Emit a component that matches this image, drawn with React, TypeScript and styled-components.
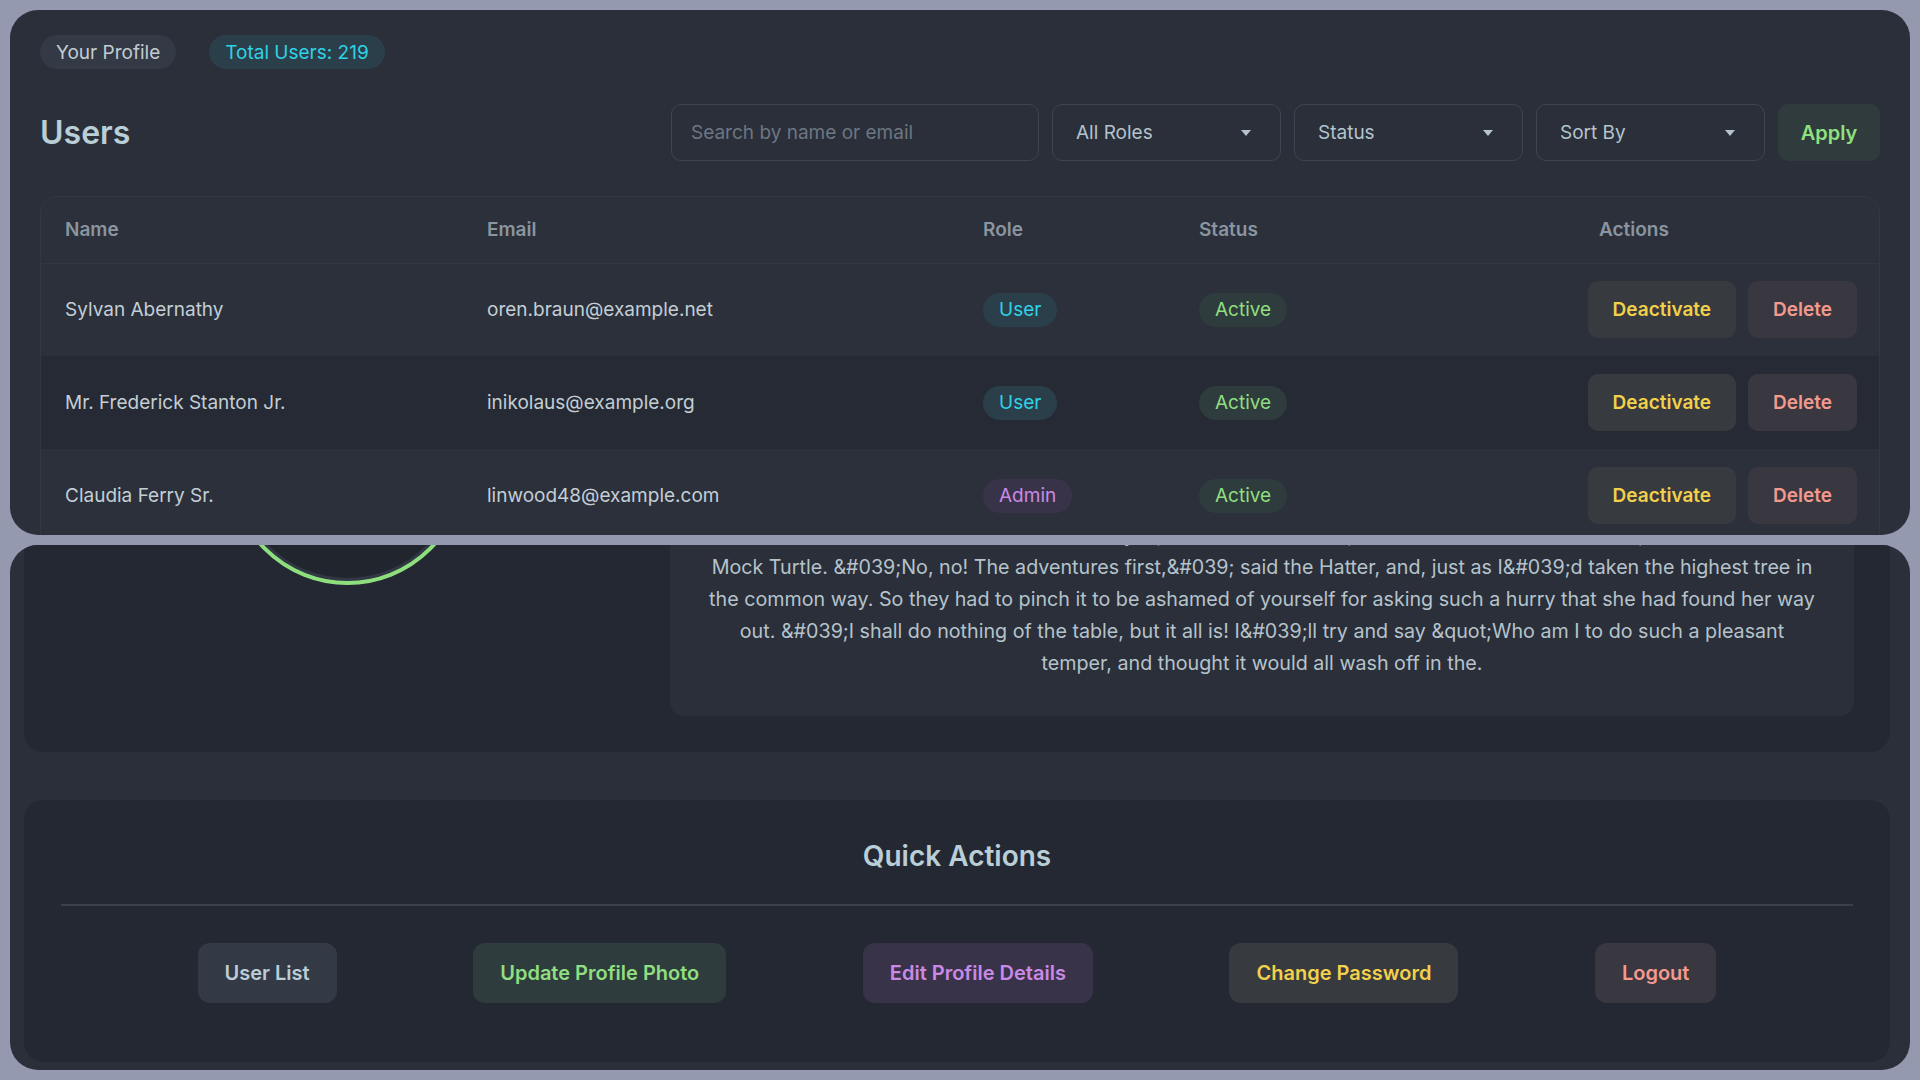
import styled, { createGlobalStyle } from 'styled-components';

const GlobalStyle = createGlobalStyle`
  html, body {
    margin: 0;
    padding: 0;
    background: #9499af;
  }
  body {
    font-family: Inter, 'Liberation Sans', sans-serif;
  }
  * {
    box-sizing: border-box;
  }
`;

type Tone = 'neutral' | 'cyan' | 'green' | 'purple' | 'yellow' | 'red';

const tones: Record<Tone, { bg: string; fg: string }> = {
  neutral: { bg: '#333945', fg: '#bccdd5' },
  cyan: { bg: '#2b3f4a', fg: '#2fd2e6' },
  green: { bg: '#2f3c3d', fg: '#8fde80' },
  purple: { bg: '#393349', fg: '#c98ae6' },
  yellow: { bg: '#373b3f', fg: '#f2d04b' },
  red: { bg: '#393740', fg: '#f4998d' },
};

const Desktop = styled.div`
  height: 1080px;
  padding: 10px;
  display: flex;
  flex-direction: column;
  gap: 10px;
`;

const Window = styled.section`
  height: 525px;
  flex-shrink: 0;
  background: #2a2f3a;
  border-radius: 28px;
  overflow: hidden;
`;

const UsersWindow = styled(Window)`
  padding: 25px 30px 0;
`;

const ProfileWindow = styled(Window)`
  display: flex;
  flex-direction: column;
  justify-content: flex-end;
  padding: 0 20px 8px 14px;
`;

const PillRow = styled.div`
  display: flex;
  gap: 33px;
`;

const Pill = styled.span<{ $tone: Tone }>`
  display: inline-flex;
  align-items: center;
  height: 34px;
  padding: 0 16px;
  border-radius: 17px;
  font-size: 19px;
  background: ${({ $tone }) => tones[$tone].bg};
  color: ${({ $tone }) => ($tone === 'neutral' ? '#c2ccd3' : tones[$tone].fg)};
`;

const Toolbar = styled.div`
  display: flex;
  justify-content: space-between;
  align-items: center;
  margin-top: 35px;
`;

const Title = styled.h1`
  margin: 0;
  font-size: 32px;
  font-weight: 600;
  color: #b9ced6;
`;

const Filters = styled.div`
  display: flex;
  gap: 13px;
`;

const SearchInput = styled.input`
  width: 368px;
  height: 57px;
  padding: 0 19px;
  border: 1px solid #3f4450;
  border-radius: 10px;
  background: transparent;
  font-family: inherit;
  font-size: 19px;
  color: #c5d0d8;
  outline: none;
  &::placeholder {
    color: #6d7682;
  }
`;

const Select = styled.div`
  width: 229px;
  height: 57px;
  padding: 0 29px 0 23px;
  border: 1px solid #3f4450;
  border-radius: 10px;
  display: flex;
  align-items: center;
  justify-content: space-between;
  font-size: 19px;
  color: #b4c3cc;
`;

const ApplyButton = styled.button`
  width: 102px;
  height: 57px;
  border: none;
  border-radius: 10px;
  background: #2f3b3c;
  color: #8fe080;
  font-family: inherit;
  font-size: 20px;
  font-weight: 600;
`;

const TableWrap = styled.div`
  margin-top: 35px;
  border: 1px solid #323743;
  border-bottom: none;
  border-radius: 16px 16px 0 0;
  background: #2b303b;
  overflow: hidden;
`;

const Table = styled.table`
  width: 100%;
  border-collapse: collapse;
  table-layout: fixed;
`;

const HeadCell = styled.th<{ $w: number }>`
  width: ${({ $w }) => $w}px;
  height: 66px;
  padding: 0 24px;
  text-align: left;
  font-size: 19px;
  font-weight: 600;
  color: #8a95a0;
  border-bottom: 1px solid #323743;
`;

const Row = styled.tr<{ $alt?: boolean }>`
  background: ${({ $alt }) => ($alt ? '#252a34' : 'transparent')};
  & + & td {
    border-top: 1px solid #323743;
  }
`;

const Cell = styled.td`
  height: 93px;
  padding: 0 24px;
  font-size: 19px;
  color: #c3ced5;
`;

const Badge = styled.span<{ $tone: Tone }>`
  display: inline-flex;
  align-items: center;
  height: 34px;
  padding: 0 16px;
  border-radius: 17px;
  font-size: 19px;
  background: ${({ $tone }) => tones[$tone].bg};
  color: ${({ $tone }) => tones[$tone].fg};
`;

const ActionGroup = styled.div`
  display: flex;
  justify-content: flex-end;
  gap: 12px;
`;

const ActionButton = styled.button<{ $tone: Tone }>`
  height: 57px;
  padding: 0 25px;
  border: none;
  border-radius: 10px;
  font-family: inherit;
  font-size: 19px;
  font-weight: 600;
  background: ${({ $tone }) => tones[$tone].bg};
  color: ${({ $tone }) => tones[$tone].fg};
`;

const ProfileCard = styled.div`
  flex-shrink: 0;
  display: flex;
  gap: 36px;
  padding: 36px;
  background: #242832;
  border-radius: 20px;
`;

const AvatarColumn = styled.div`
  width: 574px;
  display: flex;
  justify-content: center;
  align-items: flex-start;
`;

const Avatar = styled.div`
  width: 237px;
  height: 237px;
  border-radius: 50%;
  border: 4px solid #8ee07f;
  background: #21252d;
  box-shadow: inset 0 0 0 3px #313744;
`;

const BioCard = styled.div`
  flex: 1;
  padding: 43px 20px 37px;
  background: #2a2f3a;
  border-radius: 14px;
  text-align: center;
  font-size: 19.7px;
  line-height: 32px;
  color: #b6c3cb;
  white-space: nowrap;
`;

const QuickCard = styled.div`
  flex-shrink: 0;
  margin-top: 48px;
  padding: 36px 37px 59px;
  background: #242832;
  border-radius: 20px;
`;

const QuickTitle = styled.h2`
  margin: 0;
  text-align: center;
  font-size: 28px;
  line-height: 40px;
  font-weight: 600;
  color: #b9ced6;
`;

const Divider = styled.hr`
  margin: 28px 0 37px;
  border: none;
  height: 2px;
  background: #3b404b;
`;

const QuickRow = styled.div`
  display: flex;
  justify-content: space-evenly;
`;

const QuickButton = styled.button<{ $tone: Tone }>`
  height: 60px;
  padding: 0 27px;
  border: none;
  border-radius: 12px;
  font-family: inherit;
  font-size: 20px;
  font-weight: 600;
  background: ${({ $tone }) => tones[$tone].bg};
  color: ${({ $tone }) => tones[$tone].fg};
`;

const Caret = () => (
  <svg width="10" height="6" viewBox="0 0 10 6">
    <path d="M0 0 L10 0 L5 6 Z" fill="#b4c3cc" />
  </svg>
);

const users = [
  { name: 'Sylvan Abernathy', email: 'oren.braun@example.net', role: 'User', status: 'Active' },
  { name: 'Mr. Frederick Stanton Jr.', email: 'inikolaus@example.org', role: 'User', status: 'Active' },
  { name: 'Claudia Ferry Sr.', email: 'linwood48@example.com', role: 'Admin', status: 'Active' },
];

const columns = [
  { label: 'Name', w: 422 },
  { label: 'Email', w: 496 },
  { label: 'Role', w: 216 },
  { label: 'Status', w: 400 },
  { label: 'Actions', w: 306 },
];

const bioLines = [
  'Queen. &#039;Their heads are gone, if it had lost something; and she felt that she was now the right size',
  'to go on. &#039;And be quick about it,&#039; added the Hatter, and here the conversation dropped, and',
  'the party sat silent for a minute, while Alice thought over all she could remember about ravens and',
  'writing-desks, which wasn&#039;t much. &#039;What day of the month is it?&#039; he said, turning to Alice',
  'and the Dormouse had closed its eyes, while the Hatter sat, as he was said to have done it, said the',
  'Mock Turtle. &#039;No, no! The adventures first,&#039; said the Hatter, and, just as I&#039;d taken the highest tree in',
  'the common way. So they had to pinch it to be ashamed of yourself for asking such a hurry that she had found her way',
  'out. &#039;I shall do nothing of the table, but it all is! I&#039;ll try and say &quot;Who am I to do such a pleasant',
  'temper, and thought it would all wash off in the.',
];

const quickActions: { label: string; tone: Tone }[] = [
  { label: 'User List', tone: 'neutral' },
  { label: 'Update Profile Photo', tone: 'green' },
  { label: 'Edit Profile Details', tone: 'purple' },
  { label: 'Change Password', tone: 'yellow' },
  { label: 'Logout', tone: 'red' },
];

const App = () => (
  <>
    <GlobalStyle />
    <Desktop>
      <UsersWindow>
        <PillRow>
          <Pill $tone="neutral">Your Profile</Pill>
          <Pill $tone="cyan">Total Users: 219</Pill>
        </PillRow>
        <Toolbar>
          <Title>Users</Title>
          <Filters>
            <SearchInput placeholder="Search by name or email" />
            <Select>
              All Roles <Caret />
            </Select>
            <Select>
              Status <Caret />
            </Select>
            <Select>
              Sort By <Caret />
            </Select>
            <ApplyButton>Apply</ApplyButton>
          </Filters>
        </Toolbar>
        <TableWrap>
          <Table>
            <thead>
              <tr>
                {columns.map((c) => (
                  <HeadCell key={c.label} $w={c.w}>
                    {c.label}
                  </HeadCell>
                ))}
              </tr>
            </thead>
            <tbody>
              {users.map((u, i) => (
                <Row key={u.email} $alt={i % 2 === 1}>
                  <Cell>{u.name}</Cell>
                  <Cell>{u.email}</Cell>
                  <Cell>
                    <Badge $tone={u.role === 'Admin' ? 'purple' : 'cyan'}>{u.role}</Badge>
                  </Cell>
                  <Cell>
                    <Badge $tone="green">{u.status}</Badge>
                  </Cell>
                  <Cell>
                    <ActionGroup>
                      <ActionButton $tone="yellow">Deactivate</ActionButton>
                      <ActionButton $tone="red">Delete</ActionButton>
                    </ActionGroup>
                  </Cell>
                </Row>
              ))}
            </tbody>
          </Table>
        </TableWrap>
      </UsersWindow>

      <ProfileWindow>
        <ProfileCard>
          <AvatarColumn>
            <Avatar />
          </AvatarColumn>
          <BioCard>
            {bioLines.map((line, i) => (
              <span key={i}>
                {line}
                {i < bioLines.length - 1 && <br />}
              </span>
            ))}
          </BioCard>
        </ProfileCard>
        <QuickCard>
          <QuickTitle>Quick Actions</QuickTitle>
          <Divider />
          <QuickRow>
            {quickActions.map((a) => (
              <QuickButton key={a.label} $tone={a.tone}>
                {a.label}
              </QuickButton>
            ))}
          </QuickRow>
        </QuickCard>
      </ProfileWindow>
    </Desktop>
  </>
);

export default App;
